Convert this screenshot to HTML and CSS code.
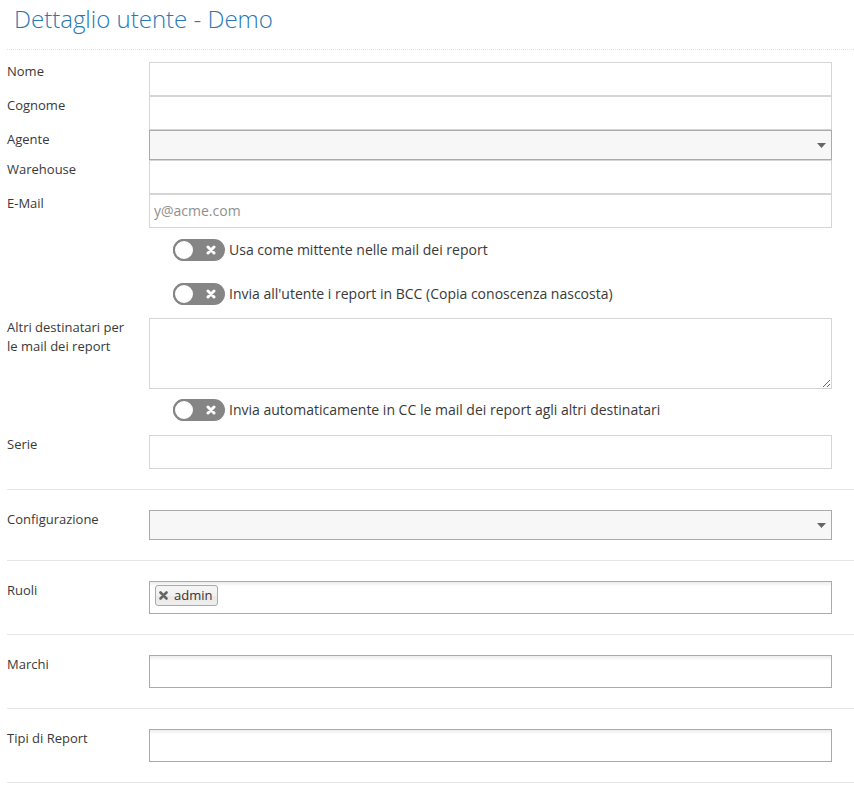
FILE: index.html
```html
<!DOCTYPE html>
<html lang="it">
<head>
<meta charset="utf-8">
<title>Dettaglio utente - Demo</title>
<link rel="stylesheet" href="styles.css">
</head>
<body>
<div class="page">
  <div class="page-header"><h1 class="title">Dettaglio utente - Demo</h1></div>
  <form class="form">
    <div class="row"><label class="lbl">Nome</label><div class="field"><input class="input" type="text"></div></div>
    <div class="row"><label class="lbl">Cognome</label><div class="field"><input class="input" type="text"></div></div>
    <div class="row"><label class="lbl">Agente</label><div class="field"><div class="select"><svg class="arrow" width="9" height="5" viewBox="0 0 9 5"><path d="M0 0H9L4.5 5Z" fill="#666"/></svg></div></div></div>
    <div class="row"><label class="lbl">Warehouse</label><div class="field"><input class="input" type="text"></div></div>
    <div class="row"><label class="lbl">E-Mail</label><div class="field"><input class="input" type="text" placeholder="y@acme.com"></div></div>

    <div class="row toggle-row t1"><div class="lbl"></div><div class="field"><label class="switch-line"><span class="switch"><span class="knob"></span><svg class="x" width="10" height="10" viewBox="0 0 10 10"><path d="M2 2L8 8M8 2L2 8" stroke="#fff" stroke-width="3" stroke-linecap="round"/></svg></span><span class="switch-text">Usa come mittente nelle mail dei report</span></label></div></div>
    <div class="row toggle-row t2"><div class="lbl"></div><div class="field"><label class="switch-line"><span class="switch"><span class="knob"></span><svg class="x" width="10" height="10" viewBox="0 0 10 10"><path d="M2 2L8 8M8 2L2 8" stroke="#fff" stroke-width="3" stroke-linecap="round"/></svg></span><span class="switch-text">Invia all'utente i report in BCC (Copia conoscenza nascosta)</span></label></div></div>

    <div class="row r-area"><label class="lbl">Altri destinatari per le mail dei report</label><div class="field"><textarea class="area"></textarea></div></div>
    <div class="row toggle-row t3"><div class="lbl"></div><div class="field"><label class="switch-line"><span class="switch"><span class="knob"></span><svg class="x" width="10" height="10" viewBox="0 0 10 10"><path d="M2 2L8 8M8 2L2 8" stroke="#fff" stroke-width="3" stroke-linecap="round"/></svg></span><span class="switch-text">Invia automaticamente in CC le mail dei report agli altri destinatari</span></label></div></div>

    <div class="row r-serie"><label class="lbl">Serie</label><div class="field"><input class="input" type="text"></div></div>
    <hr class="sep">
    <div class="row"><label class="lbl">Configurazione</label><div class="field"><div class="select"><svg class="arrow" width="9" height="5" viewBox="0 0 9 5"><path d="M0 0H9L4.5 5Z" fill="#666"/></svg></div></div></div>
    <hr class="sep">
    <div class="row"><label class="lbl">Ruoli</label><div class="field"><div class="multi"><span class="tag"><svg class="tag-x" width="9" height="9" viewBox="0 0 9 9"><path d="M1.5 1.5L7.5 7.5M7.5 1.5L1.5 7.5" stroke="#666" stroke-width="2.6" stroke-linecap="round"/></svg><span>admin</span></span></div></div></div>
    <hr class="sep">
    <div class="row"><label class="lbl">Marchi</label><div class="field"><div class="multi"></div></div></div>
    <hr class="sep">
    <div class="row"><label class="lbl">Tipi di Report</label><div class="field"><div class="multi"></div></div></div>
    <hr class="sep">
  </form>
</div>
</body>
</html>
```
FILE: styles.css
```css
html, body {
  margin: 0;
  padding: 0;
  background: #fff;
}
body {
  font-family: "Open Sans", "Liberation Sans", sans-serif;
  font-size: 13px;
  color: #393939;
}
.page {
  margin-left: 7px;
}
.page-header {
  padding: 3px 0 14px 7px;
  border-bottom: 1px dotted #e2e2e2;
}
.title {
  margin: 0;
  font-size: 24px;
  line-height: 32px;
  font-weight: 300;
  color: #2679b5;
}
.form {
  margin-top: 12px;
}
.row {
  display: flex;
  align-items: flex-start;
}
.lbl {
  width: 142px;
  flex: none;
  box-sizing: border-box;
  padding-right: 12px;
  line-height: 19px;
}
.field {
  flex: 1;
  padding-right: 22px;
  min-width: 0;
}
.input {
  display: block;
  box-sizing: border-box;
  width: 100%;
  height: 34px;
  margin: 0;
  border: 1px solid #d5d5d5;
  border-radius: 0;
  padding: 5px 4px 6px;
  font-family: "Open Sans", "Liberation Sans", sans-serif;
  font-size: 14px;
  color: #858585;
  background: #fff;
  outline: none;
}
.input::placeholder {
  color: #8f8f8f;
}
.select {
  position: relative;
  box-sizing: border-box;
  height: 30px;
  border: 1px solid #aaa;
  background: #f7f7f7;
}
.arrow {
  position: absolute;
  right: 5px;
  top: 12px;
}
.toggle-row .field {
  padding-left: 24px;
}
.t1 { margin-top: 11px; }
.t2 { margin-top: 22px; }
.r-area { margin-top: 13px; }
.t3 { margin-top: 10px; }
.r-serie { margin-top: 14px; }
.switch-line {
  display: flex;
  align-items: center;
  gap: 4px;
  height: 22px;
}
.switch {
  position: relative;
  display: inline-flex;
  align-items: center;
  justify-content: flex-end;
  box-sizing: border-box;
  width: 52px;
  height: 22px;
  border-radius: 11px;
  background: #858585;
  padding-right: 9px;
  flex: none;
}
.knob {
  position: absolute;
  left: 0;
  top: 0;
  box-sizing: border-box;
  width: 22px;
  height: 22px;
  border-radius: 50%;
  background: #fff;
  border: 2px solid #858585;
}
.x {
  display: block;
}
.switch-text {
  font-size: 14px;
  line-height: 22px;
  white-space: nowrap;
}
.area {
  display: block;
  box-sizing: border-box;
  width: 100%;
  height: 71px;
  margin: 0;
  border: 1px solid #d5d5d5;
  border-radius: 0;
  padding: 5px 4px;
  font-family: "Open Sans", "Liberation Sans", sans-serif;
  font-size: 14px;
  outline: none;
}
.sep {
  margin: 20px 0;
  border: 0;
  border-top: 1px solid #e5e5e5;
  height: 0;
}
.multi {
  box-sizing: border-box;
  height: 33px;
  border: 1px solid #aaa;
  background: #fff linear-gradient(#eee 1%, #fff 15%);
  padding: 3px 5px;
  display: flex;
  align-items: flex-start;
}
.tag {
  display: inline-flex;
  align-items: center;
  gap: 6px;
  box-sizing: border-box;
  height: 21px;
  padding: 0 5px 0 3px;
  border: 1px solid #aaa;
  border-radius: 3px;
  background: linear-gradient(#f4f4f4 20%, #f0f0f0 50%, #e8e8e8 52%, #eee);
  color: #333;
  font-size: 13px;
  line-height: 19px;
}
.tag-x {
  display: block;
}
```
